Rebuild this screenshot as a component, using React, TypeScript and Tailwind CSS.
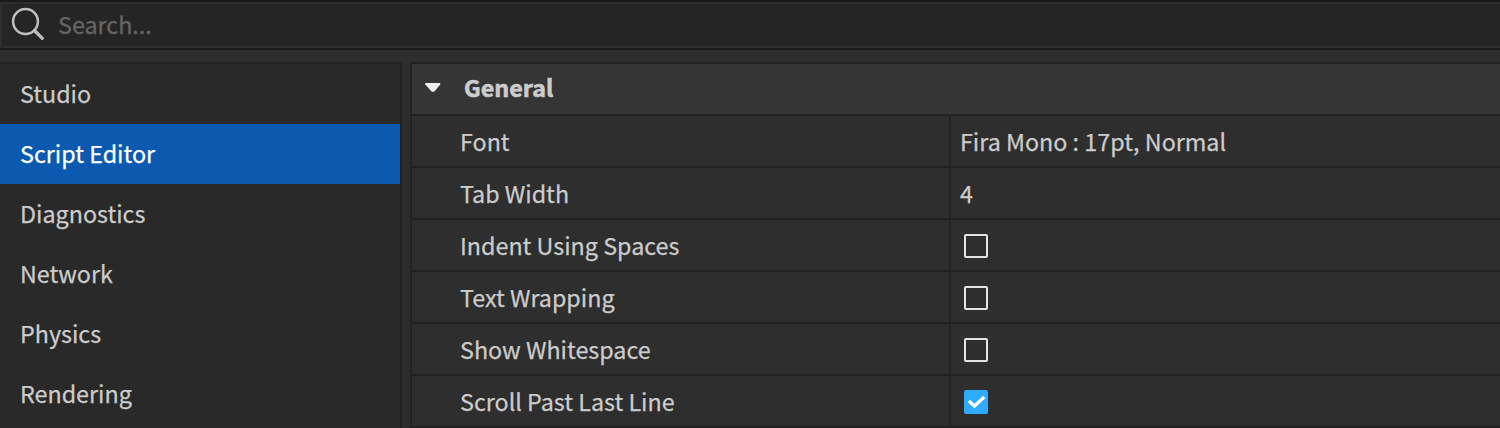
import React from "react";

const categories = ["Studio", "Script Editor", "Diagnostics", "Network", "Physics", "Rendering"];

type Setting = { label: string; value: string | boolean };

const settings: Setting[] = [
  { label: "Font", value: "Fira Mono : 17pt, Normal" },
  { label: "Tab Width", value: "4" },
  { label: "Indent Using Spaces", value: false },
  { label: "Text Wrapping", value: false },
  { label: "Show Whitespace", value: false },
  { label: "Scroll Past Last Line", value: true },
];

function Checkbox({ checked }: { checked: boolean }) {
  return (
    <span
      role="checkbox"
      aria-checked={checked}
      className={
        checked
          ? "mt-[2px] ml-1 block size-6 rounded-[2px] bg-[#2fabff]"
          : "mt-[2px] ml-1 block size-6 rounded-[2px] border-2 border-[#e3e3e3]"
      }
    >
      {checked && (
        <svg viewBox="0 0 24 24" className="size-6" fill="none" stroke="white" strokeWidth="3.3">
          <path d="M4.8 11 L10.5 16 L20.3 7" />
        </svg>
      )}
    </span>
  );
}

function SearchBar() {
  return (
    <div className="flex h-[50px] shrink-0 items-center border-y-2 border-[#1b1b1b]">
      <div className="flex h-full w-full items-center border-y-2 border-l-2 border-[#2e2e2e] bg-[#252525] pb-[2px] pl-2">
        <svg viewBox="0 0 36 36" className="size-9 shrink-0" fill="none" stroke="#c0c0c0">
          <circle cx="15.5" cy="15.5" r="12.4" strokeWidth="2.5" />
          <path d="M24.5 24.5 L32.3 32.3" strokeWidth="3.2" strokeLinecap="round" />
        </svg>
        <span className="ml-3 text-[#666666]">Search...</span>
      </div>
    </div>
  );
}

export default function App() {
  return (
    <div className="flex h-[428px] w-full flex-col overflow-hidden bg-[#2e2e2e] font-['Noto_Sans_CJK_JP','Noto_Sans_CJK_SC',sans-serif] text-[23.3px] leading-[34px] whitespace-nowrap text-[#cccccc] [-webkit-text-stroke:0.25px_currentColor]">
      <SearchBar />
      <div className="mt-3 flex min-h-0 flex-1 gap-2">
        <nav className="w-[402px] shrink-0 border-t-2 border-r-2 border-[#222222] bg-[#292929]">
          {categories.map((name) => (
            <div
              key={name}
              className={
                name === "Script Editor"
                  ? "flex h-[60px] items-center bg-[#0b5aaf] pb-[2px] pl-5 text-white"
                  : "flex h-[60px] items-center pb-[2px] pl-5"
              }
            >
              {name}
            </div>
          ))}
        </nav>
        <section className="min-w-0 flex-1 border-t-2 border-l-2 border-[#222222]">
          <div className="flex h-[52px] items-center border-b-2 border-[#222222] bg-[#353535] pb-1 font-bold [-webkit-text-stroke:0.6px_currentColor]">
            <svg viewBox="0 0 16 10" className="ml-[13px] h-[10px] w-4 shrink-0" fill="#eeeeee">
              <path d="M0.3 1 H15.2 V2.5 L9.2 9.7 H6.8 L0.3 2.5 Z" />
            </svg>
            <span className="ml-[23px]">General</span>
          </div>
          {settings.map(({ label, value }) => (
            <div key={label} className="flex h-[52px] border-b-2 border-[#222222]">
              <div className="flex w-[539px] shrink-0 items-center border-r-2 border-[#222222] pl-12">{label}</div>
              <div className="flex flex-1 items-center pl-[9px]">
                {typeof value === "boolean" ? <Checkbox checked={value} /> : value}
              </div>
            </div>
          ))}
        </section>
      </div>
    </div>
  );
}
